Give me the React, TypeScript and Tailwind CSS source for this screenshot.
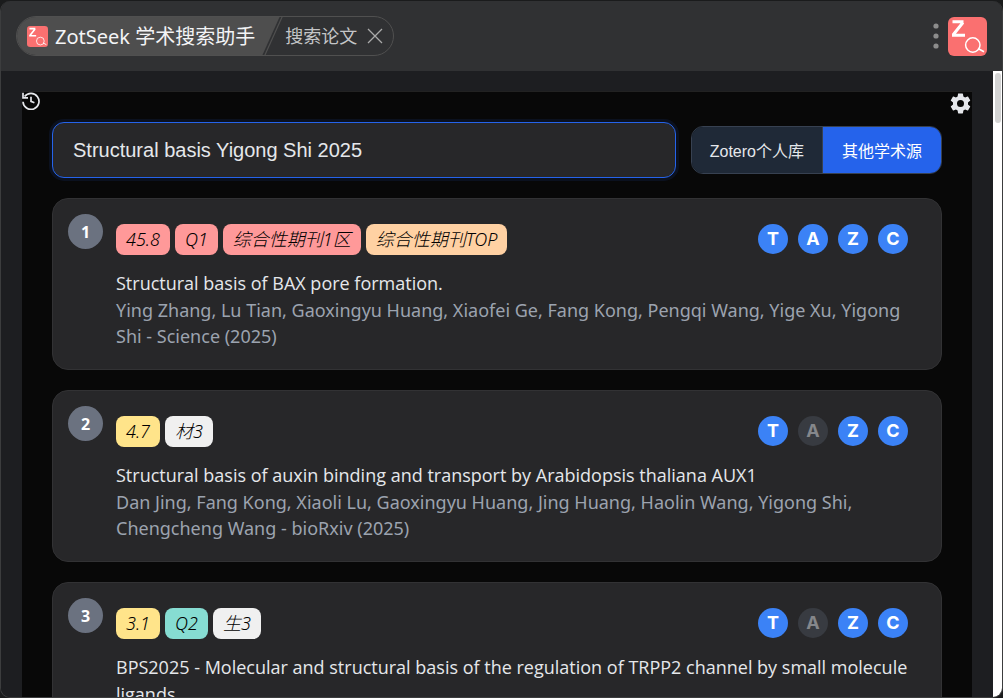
import { useState } from 'react'
import clsx from 'clsx'

const tagColors = {
  red: 'bg-[#ff9999]',
  orange: 'bg-[#ffd1a3]',
  yellow: 'bg-[#ffe48a]',
  teal: 'bg-[#86dcd2]',
  gray: 'bg-[#f0f0f0]',
}

type Paper = {
  title: string
  authors?: string
  tags: { label: string; color: keyof typeof tagColors }[]
  disabled: string[]
}

const papers: Paper[] = [
  {
    title: 'Structural basis of BAX pore formation.',
    authors:
      'Ying Zhang, Lu Tian, Gaoxingyu Huang, Xiaofei Ge, Fang Kong, Pengqi Wang, Yige Xu, Yigong Shi - Science (2025)',
    tags: [
      { label: '45.8', color: 'red' },
      { label: 'Q1', color: 'red' },
      { label: '综合性期刊1区', color: 'red' },
      { label: '综合性期刊TOP', color: 'orange' },
    ],
    disabled: [],
  },
  {
    title: 'Structural basis of auxin binding and transport by Arabidopsis thaliana AUX1',
    authors:
      'Dan Jing, Fang Kong, Xiaoli Lu, Gaoxingyu Huang, Jing Huang, Haolin Wang, Yigong Shi, Chengcheng Wang - bioRxiv (2025)',
    tags: [
      { label: '4.7', color: 'yellow' },
      { label: '材3', color: 'gray' },
    ],
    disabled: ['A'],
  },
  {
    title:
      'BPS2025 - Molecular and structural basis of the regulation of TRPP2 channel by small molecule ligands',
    tags: [
      { label: '3.1', color: 'yellow' },
      { label: 'Q2', color: 'teal' },
      { label: '生3', color: 'gray' },
    ],
    disabled: ['A'],
  },
]

const actions = ['T', 'A', 'Z', 'C']

function Logo({ className }: { className: string }) {
  return (
    <svg viewBox="0 0 39 39" className={className} fill="none" aria-hidden="true">
      <rect width="39" height="39" rx="6" fill="#fa7070" />
      <path d="M4.5 4.8h11M15 5.5L5 18M4 18.2h13" stroke="#fff" strokeWidth="3" />
      <circle cx="24.8" cy="28" r="7.2" stroke="#fff" strokeWidth="1.5" />
      <path d="M30 31.5l6 3.2" stroke="#fff" strokeWidth="1.7" />
    </svg>
  )
}

function HistoryIcon() {
  return (
    <svg viewBox="0 0 18 18" className="size-[18px]" fill="none" stroke="#e5e7eb" aria-hidden="true">
      <path d="M2.6 4.6A8 8 0 1 1 1 9.8" strokeWidth="1.7" />
      <path d="M1 .8v5h5" strokeWidth="1.7" />
      <path d="M9 4.8v4.6l3.4 1.4" strokeWidth="1.7" />
    </svg>
  )
}

function GearIcon() {
  return (
    <svg viewBox="1.5 1.5 21 21" className="size-[21px]" fill="#e5e7eb" aria-hidden="true">
      <path d="M19.43 12.98c.04-.32.07-.64.07-.98s-.03-.66-.07-.98l2.11-1.65c.19-.15.24-.42.12-.64l-2-3.46c-.12-.22-.39-.3-.61-.22l-2.49 1c-.52-.4-1.08-.73-1.69-.98l-.38-2.65A.488.488 0 0 0 14 2h-4c-.25 0-.46.18-.49.42l-.38 2.65c-.61.25-1.17.59-1.69.98l-2.49-1c-.23-.09-.49 0-.61.22l-2 3.46c-.13.22-.07.49.12.64l2.11 1.65c-.04.32-.07.65-.07.98s.03.66.07.98l-2.11 1.65c-.19.15-.24.42-.12.64l2 3.46c.12.22.39.3.61.22l2.49-1c.52.4 1.08.73 1.69.98l.38 2.65c.03.24.24.42.49.42h4c.25 0 .46-.18.49-.42l.38-2.65c.61-.25 1.17-.59 1.69-.98l2.49 1c.23.09.49 0 .61-.22l2-3.46c.12-.22.07-.49-.12-.64l-2.11-1.65zM12 15.5a3.5 3.5 0 1 1 0-7 3.5 3.5 0 0 1 0 7z" />
    </svg>
  )
}

function Header() {
  return (
    <header className="flex h-[70px] shrink-0 items-center justify-between bg-[#303133] px-[15px]">
      <div className="flex h-10 items-center overflow-hidden rounded-full border border-[#505050]">
        <div className="flex h-10 items-center gap-[7px] bg-[#4e4e4e] pr-1 pl-[10px] font-['Noto_Sans','Noto_Sans_CJK_SC',sans-serif] text-xl whitespace-nowrap text-gray-100">
          <Logo className="size-[21px]" />
          <span className="pt-[2px]">ZotSeek 学术搜索助手</span>
        </div>
        <svg viewBox="0 0 24 40" className="h-10 w-6" aria-hidden="true">
          <path d="M0 0h21L3 40H0z" fill="#4e4e4e" />
          <path d="M23.5 0l-18 40" stroke="#505050" strokeWidth="1.2" />
        </svg>
        <span className="pl-[2px] text-lg whitespace-nowrap text-[#c4c5c7]">搜索论文</span>
        <button aria-label="关闭" className="mr-[10px] ml-[10px]">
          <svg viewBox="0 0 16 16" className="size-4" stroke="#aaa" strokeWidth="1.3" aria-hidden="true">
            <path d="M1 1l14 14M15 1L1 15" />
          </svg>
        </button>
      </div>

      <div className="flex items-center gap-[9px]">
        <button aria-label="更多">
          <svg viewBox="0 0 6 26" className="h-[26px] w-[6px]" fill="#8c8c8c" aria-hidden="true">
            <circle cx="3" cy="3" r="2.6" />
            <circle cx="3" cy="13" r="2.6" />
            <circle cx="3" cy="23" r="2.6" />
          </svg>
        </button>
        <Logo className="size-[39px]" />
      </div>
    </header>
  )
}

function PaperCard({ paper, index }: { paper: Paper; index: number }) {
  return (
    <li className="flex gap-[13px] rounded-2xl border border-[#323234] bg-[#272729] px-[15px] pt-[15px] pb-5">
      <div className="flex size-[35px] shrink-0 items-center justify-center rounded-full bg-[#6b7280] text-base font-bold text-white">
        {index}
      </div>

      <div className="min-w-0 flex-1 pt-[10px] pr-[10px]">
        <div className="flex items-start justify-between pr-2">
          <div className="flex gap-[5px] font-['Noto_Sans','Noto_Sans_CJK_SC',sans-serif]">
            {paper.tags.map((tag) => (
              <span
                key={tag.label}
                className={clsx(
                  'h-[31px] rounded-lg px-[10px] text-lg leading-[31px] font-light whitespace-nowrap text-black italic',
                  tagColors[tag.color]
                )}
              >
                {tag.label}
              </span>
            ))}
          </div>

          <div className="flex gap-[10px]">
            {actions.map((action) => (
              <button
                key={action}
                disabled={paper.disabled.includes(action)}
                className="size-[30px] rounded-full bg-[#3b82f6] font-['Inter',sans-serif] text-lg leading-[30px] font-bold text-white disabled:bg-[#383b41] disabled:text-[#85878b]"
              >
                {action}
              </button>
            ))}
          </div>
        </div>

        <h2 className="mt-[15px] text-lg leading-[27px] font-medium text-[#e5e7eb]">{paper.title}</h2>
        {paper.authors && (
          <p className="font-['Noto_Sans',sans-serif] text-lg leading-[26px] text-[#9ca3af]">{paper.authors}</p>
        )}
      </div>
    </li>
  )
}

export default function App() {
  const [query, setQuery] = useState('Structural basis Yigong Shi 2025')
  const [source, setSource] = useState('other')

  return (
    <div className="h-screen bg-[#1a1b1c] pt-px font-['Open_Sans','Noto_Sans_CJK_SC',sans-serif]">
      <div className="flex h-full flex-col overflow-hidden rounded-[10px] border-x border-b border-[#3c3d3e]">
        <Header />

        <div className="flex min-h-0 flex-1">
          <main className="min-w-0 flex-1 overflow-hidden bg-[#1d1e21] px-[21px] pt-5">
            <div className="relative border-t border-[#222] bg-[#080808] px-[30px] pt-[30px]">
              <button aria-label="历史记录" className="absolute top-0 left-0">
                <HistoryIcon />
              </button>
              <button aria-label="设置" className="absolute top-px right-px">
                <GearIcon />
              </button>

              <div className="flex items-center gap-[15px]">
                <input
                  aria-label="搜索"
                  value={query}
                  onChange={(e) => setQuery(e.target.value)}
                  className="h-14 min-w-0 flex-1 rounded-xl border border-[#2563eb] bg-[#272729] px-5 font-['Liberation_Sans',sans-serif] text-xl text-[#e5e7eb] ring-3 ring-[#2563eb]/10 outline-none"
                />

                <div className="flex h-12 overflow-hidden rounded-xl border border-[#374151] font-['Liberation_Sans','Noto_Sans_CJK_SC',sans-serif] text-base">
                  <button
                    onClick={() => setSource('zotero')}
                    className={clsx(
                      'border-r border-[#374151] px-[18px] pt-[3px] whitespace-nowrap',
                      source === 'zotero' ? 'bg-[#2563eb] text-white' : 'bg-[#1f2937] text-[#e5e7eb]'
                    )}
                  >
                    Zotero个人库
                  </button>
                  <button
                    onClick={() => setSource('other')}
                    className={clsx(
                      'px-[19px] pt-[3px] whitespace-nowrap',
                      source === 'other' ? 'bg-[#2563eb] text-white' : 'bg-[#1f2937] text-[#e5e7eb]'
                    )}
                  >
                    其他学术源
                  </button>
                </div>
              </div>

              <ol className="mt-5 flex flex-col gap-5">
                {papers.map((paper, i) => (
                  <PaperCard key={paper.title} paper={paper} index={i + 1} />
                ))}
              </ol>
            </div>
          </main>

          {/* scrollbar */}
          <div className="flex w-[9px] shrink-0 justify-center bg-white pt-[2px]">
            <div className="h-[50px] w-[6px] rounded-full bg-[#d4d4d4]" />
          </div>
        </div>
      </div>
    </div>
  )
}
